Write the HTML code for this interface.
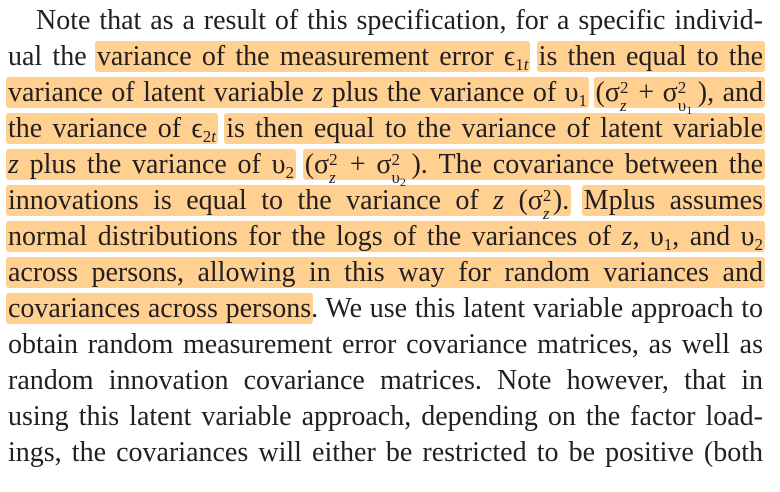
<!DOCTYPE html>
<html><head><meta charset="utf-8"><style>
html,body{margin:0;padding:0;background:#fff;width:780px;height:492px;overflow:hidden}
.w{position:absolute;left:8px;top:3px;width:755px;font-family:"Liberation Serif","Times New Roman",serif;font-size:28px;color:#231f20}
.l{height:36px;line-height:36px;text-align:justify;text-align-last:justify;white-space:nowrap;overflow:visible}
.l.ind{padding-left:28px}
.h{background:#ffd08f;padding:0 2px;margin:0 -2px;border-radius:3px}
i{font-style:italic}
.s{position:relative;display:inline-block;line-height:0;font-size:17px}
.s .u{position:absolute;left:0;top:-13px}
.s .d{position:absolute;left:0;top:5px}
sub,sup{line-height:0;font-size:17px}
sub{vertical-align:-5px}
</style></head><body><div class="w">
<div class="l ind">Note that as a result of this specification, for a specific individ-</div>
<div class="l">ual the <span class="h">variance of the measurement error ϵ<sub>1<i>t</i></sub></span> <span class="h">is then equal to the</span></div>
<div class="l"><span class="h">variance of latent variable <i>z</i> plus the variance of υ<sub>1</sub></span> <span class="h">(σ<span class="s" style="width:10px"><span class="u">2</span><span class="d"><i>z</i></span></span> + σ<span class="s" style="width:20px"><span class="u">2</span><span class="d">υ<sub style="font-size:12px;vertical-align:-3px">1</sub></span></span>), and</span></div>
<div class="l"><span class="h">the variance of ϵ<sub>2<i>t</i></sub></span> <span class="h">is then equal to the variance of latent variable</span></div>
<div class="l"><span class="h"><i>z</i> plus the variance of υ<sub>2</sub></span> <span class="h">(σ<span class="s" style="width:10px"><span class="u">2</span><span class="d"><i>z</i></span></span> + σ<span class="s" style="width:20px"><span class="u">2</span><span class="d">υ<sub style="font-size:12px;vertical-align:-3px">2</sub></span></span>). The covariance between the</span></div>
<div class="l"><span class="h">innovations is equal to the variance of <i>z</i> (σ<span class="s" style="width:10px"><span class="u">2</span><span class="d"><i>z</i></span></span>).</span> <span class="h">Mplus assumes</span></div>
<div class="l"><span class="h">normal distributions for the logs of the variances of <i>z</i>, υ<sub>1</sub>, and υ<sub>2</sub></span></div>
<div class="l"><span class="h">across persons, allowing in this way for random variances and</span></div>
<div class="l"><span class="h">covariances across persons</span>. We use this latent variable approach to</div>
<div class="l">obtain random measurement error covariance matrices, as well as</div>
<div class="l">random innovation covariance matrices. Note however, that in</div>
<div class="l">using this latent variable approach, depending on the factor load-</div>
<div class="l">ings, the covariances will either be restricted to be positive (both</div>
</div></body></html>
